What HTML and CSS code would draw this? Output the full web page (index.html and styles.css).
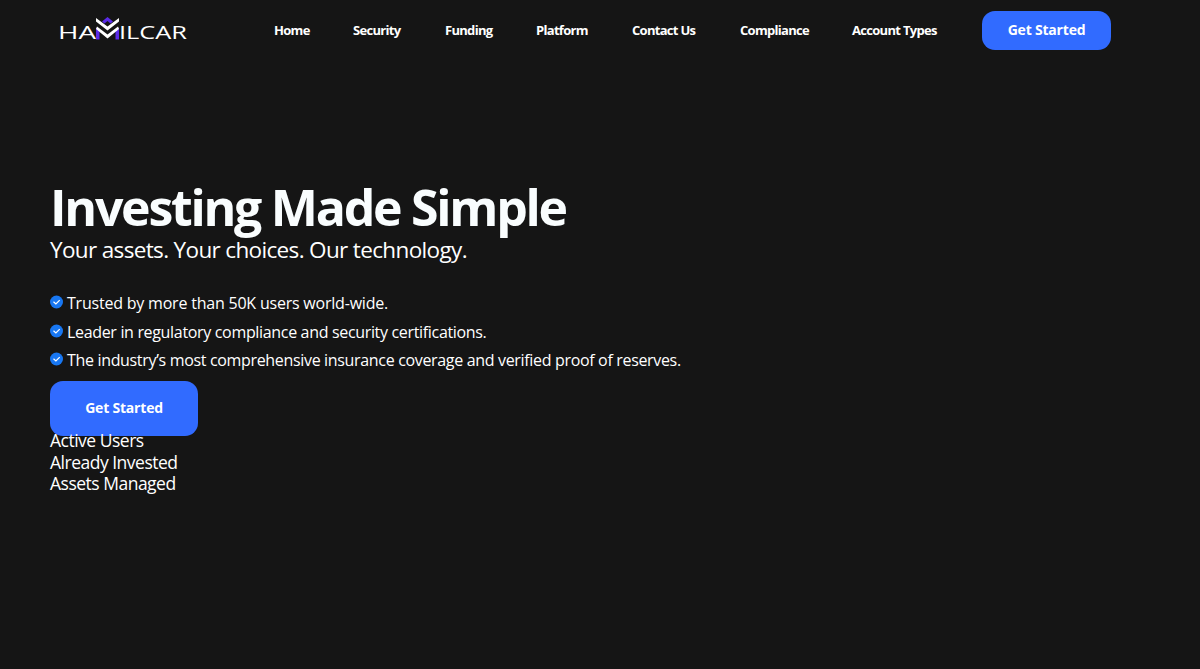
FILE: index.html
```
<!DOCTYPE html>
<html lang="en">
<head>
  <meta charset="UTF-8" />
  <meta name="viewport" content="width=device-width, initial-scale=1.0" />
  <title>Hamilcar</title>
  <link rel="stylesheet" href="styles.css">
</head>
<body>
  <header class="header">
    <a class="logo" href="#">
      <svg width="130" height="30" viewBox="0 0 130 30" role="img" aria-label="Hamilcar">
        <text x="-2" y="23" textLength="38" lengthAdjust="spacingAndGlyphs">HA</text>
        <path class="logo-accent" d="M36 11.500L39.500 14.500V23.500H36ZM59 11.500L55.500 14.500V23.500H59ZM47.500 1L53 5.500L50.500 7.500L47.500 5L44.500 7.500L42 5.500Z" />
        <path class="logo-mark" d="M36 2L47.500 10.500L59 2V5.500L47.500 14.500L36 5.500ZM37 10.500L47.500 18.500L58 10.500L59 13L47.500 22.500L36 13Z" />
        <text x="59" y="23" textLength="68" lengthAdjust="spacingAndGlyphs">ILCAR</text>
      </svg>
    </a>
    <nav class="nav">
      <a href="#">Home</a>
      <a href="#">Security</a>
      <a href="#">Funding</a>
      <a href="#">Platform</a>
      <a href="#">Contact Us</a>
      <a href="#">Compliance</a>
      <a href="#">Account Types</a>
    </nav>
    <a class="btn btn-small" href="#">Get Started</a>
  </header>

  <main class="hero">
    <h1>Investing Made Simple</h1>
    <p class="subtitle">Your assets. Your choices. Our technology.</p>

    <ul class="features">
      <li>
        <svg class="check" viewBox="0 0 14 14"><circle cx="6.500" cy="7" r="6.500" /><path d="M3.500 6.800L5.900 9L9.700 5.200" /></svg>
        <span class="line-one">Trusted by more than 50K users world-wide.</span>
      </li>
      <li>
        <svg class="check" viewBox="0 0 14 14"><circle cx="6.500" cy="7" r="6.500" /><path d="M3.500 6.800L5.900 9L9.700 5.200" /></svg>
        <span>Leader in regulatory compliance and security certifications.</span>
      </li>
      <li>
        <svg class="check" viewBox="0 0 14 14"><circle cx="6.500" cy="7" r="6.500" /><path d="M3.500 6.800L5.900 9L9.700 5.200" /></svg>
        <span>The industry’s most comprehensive insurance coverage and verified proof of reserves.</span>
      </li>
    </ul>

    <a class="btn btn-large" href="#">Get Started</a>

    <div class="stats">
      <p>Active Users</p>
      <p>Already Invested</p>
      <p>Assets Managed</p>
    </div>
  </main>
</body>
</html>
```
FILE: styles.css
```
* { box-sizing: border-box; margin: 0; padding: 0; }
body {
  font-family: "Open Sans", "Noto Sans", sans-serif;
  background: #151515;
  color: #fff;
  min-height: 100vh;
}
a {
  color: #fff;
  text-decoration: none;
}
.header {
  display: flex;
  align-items: center;
  height: 61px;
  padding-left: 60px;
}
.logo {
  width: 214px;
  height: 30px;
}
.logo svg {
  display: block;
  overflow: visible;
}
.logo text {
  font-family: "Open Sans", sans-serif;
  font-size: 19px;
  fill: #fff;
}
.logo-mark {
  fill: #fff;
}
.logo-accent {
  fill: #5b2be8;
}
.nav {
  display: grid;
  grid-template-columns: 79px 92px 91px 96px 108px 112px 130px;
  padding-bottom: 1px;
  font-size: 13px;
  font-weight: 700;
  letter-spacing: -0.7px;
  white-space: nowrap;
}
.btn {
  display: flex;
  align-items: center;
  justify-content: center;
  padding-bottom: 1px;
  background: #316bff;
  font-size: 14px;
  font-weight: 700;
  letter-spacing: -0.2px;
}
.btn-small {
  width: 129px;
  height: 39px;
  padding-bottom: 2px;
  border-radius: 13px;
}
.btn-large {
  width: 148px;
  height: 55px;
  border-radius: 13px;
}
.hero {
  padding: 120px 50px 0;
}
h1 {
  margin-bottom: 2px;
  font-size: 50px;
  line-height: 52px;
  font-weight: 700;
  letter-spacing: -2.250px;
  color: #f9fdfe;
}
.subtitle {
  font-size: 22.500px;
  line-height: 30px;
  letter-spacing: -0.650px;
}
.features {
  list-style: none;
  margin-top: 24px;
  font-size: 16px;
  line-height: 28.500px;
  letter-spacing: -0.330px;
  white-space: nowrap;
}
.features li {
  display: flex;
}
.line-one {
  letter-spacing: -0.210px;
}
.check {
  width: 14px;
  height: 14px;
  margin: 6px 3px 0 0;
}
.check circle {
  fill: #1877f2;
}
.check path {
  fill: none;
  stroke: #fff;
  stroke-width: 1.200;
}
.features + .btn {
  margin-top: 6px;
}
.stats {
  position: relative;
  margin-top: -5.500px;
  font-size: 17.500px;
  line-height: 21.500px;
  letter-spacing: -0.500px;
}
```
